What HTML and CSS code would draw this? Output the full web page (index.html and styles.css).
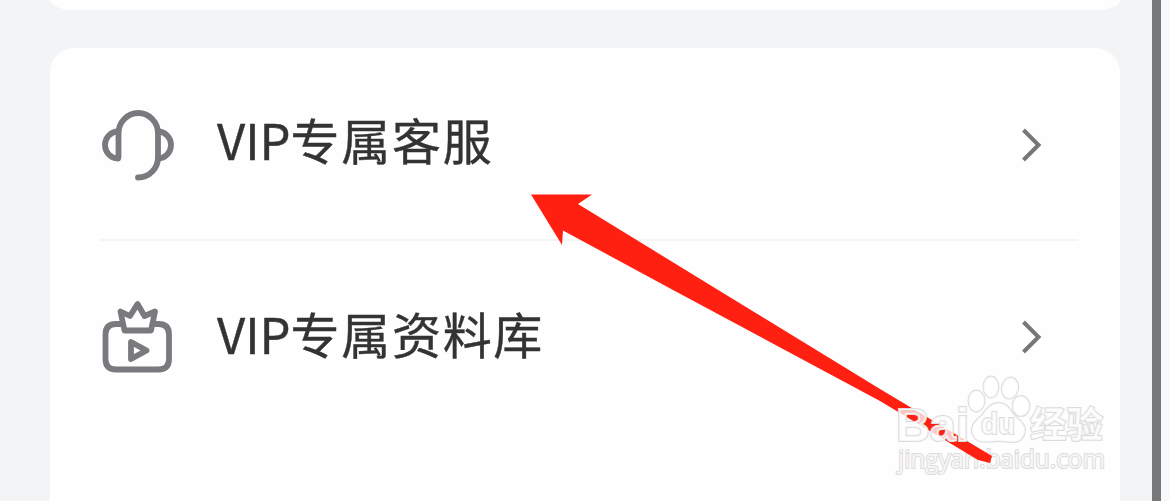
FILE: index.html
```html
<!DOCTYPE html>
<html lang="zh-CN">
<head>
<meta charset="utf-8">
<title>VIP</title>
<link rel="stylesheet" href="styles.css">
</head>
<body>
<div class="page">
  <main class="content">
    <section class="card card-previous"></section>
    <section class="card card-menu">
      <div class="row">
        <svg class="icon" viewBox="100 104 76 80">
          <path d="M118.500 157V133.500a19.750 20.500 0 0 1 39.500 0V157a20 20 0 0 1-20 20.500"/>
          <path d="M118 131.500a13 13.500 0 0 0 0 27V157M158 131.500a13 13.500 0 0 1 0 27"/>
        </svg>
        <span class="label"><span class="latin">VIP</span>专属客服</span>
        <svg class="chevron" viewBox="0 -1 24 36"><path d="M3.500 3 18.500 18 3.500 33"/></svg>
      </div>
      <div class="row">
        <svg class="icon" viewBox="100 297 76 80">
          <path d="M122 324h-6q-10.500 0-10.500 10.500v24.500q0 10.500 10.500 10.500h42.500q10.500 0 10.500-10.500v-24.500q0-10.500-10.500-10.500H153"/>
          <path d="M120.500 311.500 124.500 330.500h26.500l4-19-10.500 4.500-7-12-7.500 12z"/>
          <path d="M131 342v17l15.500-8.500z"/>
        </svg>
        <span class="label"><span class="latin">VIP</span>专属资料库</span>
        <svg class="chevron" viewBox="0 0 24 36"><path d="M3.500 3 18.500 18 3.500 33"/></svg>
      </div>
    </section>
  </main>
  <div class="edge"></div>
  <svg class="overlay" viewBox="0 0 1170 501">
    <g class="mark">
      <text class="site" x="898" y="468" textLength="207" lengthAdjust="spacingAndGlyphs">jingyan.baidu.com</text>
    </g>
    <path class="arrow" d="M531 194.500H592L578 204 710 285 880 389 992 456 990 463 978 460 880 401 673 290 563 230.500 562 245z"/>
    <g class="mark">
      <text class="brand" x="896" y="441" textLength="73" lengthAdjust="spacingAndGlyphs">Bai</text>
      <ellipse cx="976.500" cy="401" rx="8" ry="10.500"/>
      <ellipse cx="991" cy="387" rx="7.500" ry="10.500"/>
      <ellipse cx="1010" cy="388" rx="8" ry="10.500" transform="rotate(12 1010 388)"/>
      <ellipse cx="1021" cy="406" rx="8.500" ry="10"/>
      <path d="M999 403c-11 0-14 10-19 14-7 6-10 11-7 18 4 10 16 6 26 6s19 4 24-4c5-9 0-14-7-20-5-4-7-14-17-14z"/>
      <text class="du" x="981" y="434" textLength="34" lengthAdjust="spacingAndGlyphs">du</text>
      <text class="brand-cjk" x="1030" y="438" textLength="73" lengthAdjust="spacingAndGlyphs">经验</text>
    </g>
  </svg>
</div>
</body>
</html>
```
FILE: styles.css
```css
body {
  margin: 0;
  background: #f8f9fb;
}
.page {
  position: relative;
  display: flex;
  width: 1170px;
  height: 501px;
  overflow: hidden;
  background: #f8f9fb;
  font-family: "Noto Sans CJK SC", sans-serif;
}
.content {
  box-sizing: border-box;
  width: 1152px;
  height: 501px;
  padding: 0 32px 0 50px;
  background: #f3f4f6;
}
.edge {
  width: 9px;
  background: #777879;
}
.card {
  background: #fefefe;
}
.card-previous {
  height: 10px;
  margin-bottom: 38px;
  border-radius: 0 0 24px 24px / 0 0 10px 10px;
}
.card-menu {
  height: 453px;
  border-radius: 24px 24px 0 0;
}
.row {
  box-sizing: border-box;
  display: flex;
  align-items: center;
  height: 192px;
  margin: 0 42px 0 50px;
  padding-right: 34px;
}
.row:first-child {
  height: 193px;
  border-bottom: 2px solid #f5f5f6;
}
.icon {
  width: 76px;
  height: 80px;
  fill: none;
  stroke: #79797e;
  stroke-width: 5.800;
  stroke-linecap: round;
  stroke-linejoin: round;
}
.label {
  flex: 1;
  margin: -9px 0 0 41px;
  color: #333;
  font-size: 49px;
  line-height: 70px;
  letter-spacing: 1.700px;
  white-space: nowrap;
  -webkit-text-stroke: 0.4px #333;
}
.latin {
  letter-spacing: 0;
}
.chevron {
  width: 24px;
  height: 36px;
  fill: none;
  stroke: #777;
  stroke-width: 4;
}
.overlay {
  position: absolute;
  inset: 0;
  width: 1170px;
  height: 501px;
}
.arrow {
  fill: #ff2012;
}
.mark {
  fill: rgba(255, 255, 255, 0.75);
  stroke: #dcdcdc;
  stroke-width: 2;
  paint-order: stroke;
}
.brand {
  font: bold 46px "Liberation Sans", sans-serif;
}
.du {
  font: bold 30px "Liberation Sans", sans-serif;
}
.brand-cjk {
  font: bold 36px "Noto Sans CJK SC", sans-serif;
}
.site {
  font: 25px "Open Sans", sans-serif;
}
```
